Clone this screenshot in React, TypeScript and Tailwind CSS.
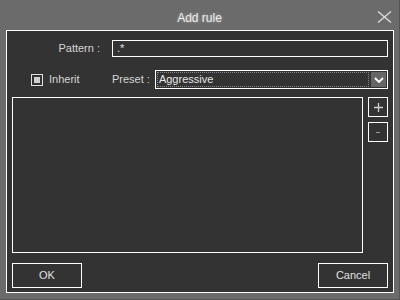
export default function App() {
  return (
    <div
      className="w-[400px] h-[300px] bg-[#6b6b6b] flex flex-col border-r border-b border-[#555555] text-[11px] text-[#d6d6d6]"
      style={{ fontFamily: '"Liberation Sans", Arial, sans-serif' }}
    >
      <div className="h-[30px] shrink-0 relative flex items-center justify-center pt-[5px]">
        <span className="text-[12px] text-[#ececec] [text-shadow:0_0_3px_rgba(255,255,255,0.45)]">Add rule</span>
        <svg className="absolute left-[377px] top-[11px]" width="15" height="12" viewBox="0 0 15 12">
          <path d="M1 0.5 L14 11.5 M14 0.5 L1 11.5" stroke="#d9d9d9" strokeWidth="1.4" fill="none" />
        </svg>
      </div>
      <div className="ml-[6px] mr-[5px] mb-[6px] flex-1 border border-white bg-[#333333] px-[5px] pt-[9px] pb-[4px] flex flex-col">
        <div className="flex items-center h-[17px]">
          <div className="w-[89px] text-right pr-[1px]">Pattern :</div>
          <div className="ml-[11px] flex-1 h-[17px] border border-white bg-[#333333] flex items-center pl-[4px] text-[#e0e0e0]">.*</div>
        </div>
        <div className="flex items-center h-[19px] mt-[13px]">
          <div className="w-[100px] flex items-center pl-[19px]">
            <div className="w-[12px] h-[12px] border border-[#e0e0e0] flex items-center justify-center">
              <div className="w-[6px] h-[6px] bg-[#cfcfcf]" />
            </div>
            <span className="ml-[6px]">Inherit</span>
          </div>
          <span>Preset :</span>
          <div className="ml-[5px] flex-1 h-[19px] border border-white bg-[#333333] flex items-center p-[1px]">
            <div className="flex-1 h-[15px] border border-dotted border-[#888888] flex items-center pl-[1px] text-[#e8e8e8]">Aggressive</div>
            <div className="ml-[2px] w-[15px] h-[15px] bg-[#666666] flex items-center justify-center">
              <svg width="10" height="6" viewBox="0 0 10 6">
                <path d="M1 1 L5 5 L9 1" stroke="#ffffff" strokeWidth="1.8" fill="none" />
              </svg>
            </div>
          </div>
        </div>
        <div className="flex mt-[8px] h-[156px]">
          <div className="flex-1 border border-white bg-[#333333]" />
          <div className="ml-[5px] flex flex-col gap-[5px]">
            <div className="w-[20px] h-[20px] border border-white flex items-center justify-center">
              <svg width="9" height="9" viewBox="0 0 9 9">
                <path d="M4.5 0 V9 M0 4.5 H9" stroke="#d0d0d0" strokeWidth="1.3" />
              </svg>
            </div>
            <div className="w-[20px] h-[20px] border border-white flex items-center justify-center">
              <div className="w-[4px] h-[1px] bg-[#999999]" />
            </div>
          </div>
        </div>
        <div className="flex justify-between mt-[10px]">
          <div className="w-[70px] h-[25px] border border-white flex items-center justify-center text-[#e0e0e0]">OK</div>
          <div className="w-[70px] h-[25px] border border-white flex items-center justify-center text-[#e0e0e0]">Cancel</div>
        </div>
      </div>
    </div>
  );
}
